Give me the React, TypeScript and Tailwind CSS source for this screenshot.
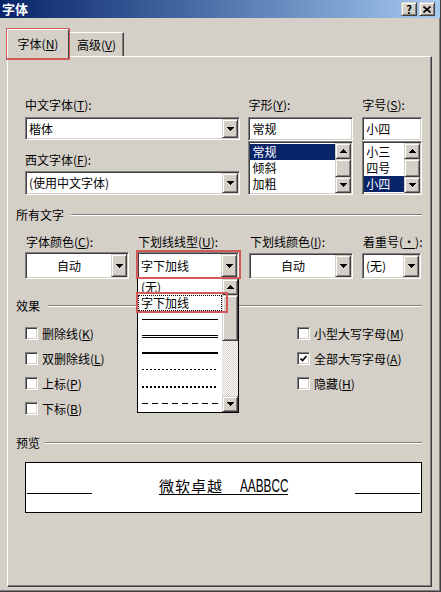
import React from "react";

// classic 3D edges
const sunken =
  "border border-t-[#808080] border-l-[#808080] border-r-white border-b-white shadow-[inset_1px_1px_0_#404040,inset_-1px_-1px_0_#d4d0c8]";
const raised =
  "border border-t-[#d4d0c8] border-l-[#d4d0c8] border-r-[#404040] border-b-[#404040] shadow-[inset_1px_1px_0_#fff,inset_-1px_-1px_0_#808080] bg-[#d4d0c8]";
const etched = "h-0 border-t border-t-[#808080] border-b border-b-white";

function ArrowDown() {
  return (
    <svg width="7" height="4" viewBox="0 0 7 4" shapeRendering="crispEdges">
      <path d="M0 0h7v1h-1v1h-1v1h-1v1h-1v-1h-1v-1h-1v-1h-1z" fill="#000" />
    </svg>
  );
}

function ArrowUp() {
  return (
    <svg width="7" height="4" viewBox="0 0 7 4" shapeRendering="crispEdges">
      <path d="M3 0h1v1h1v1h1v1h1v1h-7v-1h1v-1h1v-1h1z" fill="#000" />
    </svg>
  );
}

function Acc({ t, k, colon = true }: { t: string; k: string; colon?: boolean }) {
  return (
    <span className="whitespace-nowrap">
      {t}(<span className="underline underline-offset-[1px]">{k}</span>){colon ? ":" : ""}
    </span>
  );
}

function DropBtn() {
  return (
    <div className={`${raised} w-[16px] h-full flex items-center justify-center shrink-0`}>
      <ArrowDown />
    </div>
  );
}

function Combo({ text, center, className }: { text: string; center?: boolean; className: string }) {
  return (
    <div className={`${sunken} ${className} bg-white p-[1px] flex`}>
      <div className={`flex-1 flex items-center ${center ? "justify-center" : "pl-[2px]"}`}>{text}</div>
      <DropBtn />
    </div>
  );
}

function PickList({ items, selected }: { items: string[]; selected: number }) {
  return (
    <div className={`${sunken} h-[54px] bg-white p-[1px] flex`}>
      <div className="flex-1 flex flex-col pt-[1px]">
        {items.map((it, i) => (
          <div
            key={it}
            className={`h-[16px] leading-[16px] pl-[2px] ${i === selected ? "bg-[#0a246a] text-white" : ""}`}
          >
            {it}
          </div>
        ))}
      </div>
      <div className="w-[16px] flex flex-col">
        <div className={`${raised} h-[16px] flex items-center justify-center`}>
          <ArrowUp />
        </div>
        <div className={`${raised} h-[18px]`} />
        <div className={`${raised} h-[16px] flex items-center justify-center`}>
          <ArrowDown />
        </div>
      </div>
    </div>
  );
}

function Check({ label, k, on }: { label: string; k: string; on?: boolean }) {
  return (
    <div className="h-[25px] flex items-center">
      <div className={`${sunken} w-[13px] h-[13px] bg-white flex items-center justify-center`}>
        {on && (
          <svg width="7" height="7" viewBox="0 0 7 7">
            <path d="M0.5 3.5 L2.5 5.5 L6.5 1" stroke="#000" strokeWidth="1.6" fill="none" />
          </svg>
        )}
      </div>
      <span className="ml-[4px]">
        <Acc t={label} k={k} colon={false} />
      </span>
    </div>
  );
}

function Section({ title, gap }: { title: string; gap: string }) {
  return (
    <div className="h-[14px] flex items-center">
      <span>{title}</span>
      <div className={`flex-1 ${gap} ${etched}`} />
    </div>
  );
}

export default function App() {
  return (
    <div className="relative w-[441px] h-[592px] overflow-hidden bg-[#d4d0c8] border-r border-b border-[#404040] shadow-[inset_-1px_-1px_0_#808080] font-['Noto_Sans_CJK_SC','Liberation_Sans',sans-serif] text-[12px] leading-[14px] text-black">
      {/* title bar */}
      <div className="h-[18px] flex items-center bg-linear-to-r from-[#0a246a] to-[#a6caf0]">
        <span className="pl-[2px] text-white font-bold text-[13px] leading-[18px]">字体</span>
        <div className="ml-auto mr-[5px] flex gap-[2px]">
          <div className={`${raised} w-[16px] h-[14px] flex items-center justify-center text-[11px] font-bold leading-none`}>?</div>
          <div className={`${raised} w-[16px] h-[14px] flex items-center justify-center`}>
            <svg width="8" height="7" viewBox="0 0 8 7">
              <path d="M0.5 0.5 L7.5 6.5 M7.5 0.5 L0.5 6.5" stroke="#000" strokeWidth="1.6" />
            </svg>
          </div>
        </div>
      </div>

      <div className="pl-[7px] pt-[11px]">
        {/* tabs */}
        <div className="flex items-end h-[27px]">
          <div className="relative z-10 -mb-[2px] w-[62px] h-[29px] bg-[#d4d0c8] border-t border-l border-white border-r border-r-[#404040] flex items-center justify-center">
            <Acc t="字体" k="N" colon={false} />
          </div>
          <div className="w-[55px] h-[24px] border-t border-l border-white border-r border-r-[#404040] shadow-[inset_-1px_0_0_#808080] flex items-center justify-center">
            <Acc t="高级" k="V" colon={false} />
          </div>
        </div>

        {/* tab page */}
        <div className="w-[425px] h-[531px] border border-t-white border-l-white border-r-[#404040] border-b-[#404040] shadow-[inset_-1px_-1px_0_#808080] pl-[8px] pr-[9px]">
          <div className="ml-[9px] mt-[41px] flex">
            <div className="w-[216px]">
              <div className="h-[14px]"><Acc t="中文字体" k="T" /></div>
              <Combo text="楷体" className="mt-[5px] h-[23px]" />
              <div className="h-[14px] mt-[13px]"><Acc t="西文字体" k="F" /></div>
              <Combo text="(使用中文字体)" className="mt-[4px] h-[24px]" />
            </div>
            <div className="w-[105px] ml-[8px]">
              <div className="h-[14px]"><Acc t="字形" k="Y" /></div>
              <div className={`${sunken} mt-[5px] h-[24px] bg-white flex items-center pl-[3px]`}>常规</div>
              <PickList items={["常规", "倾斜", "加粗"]} selected={0} />
            </div>
            <div className="w-[60px] ml-[9px]">
              <div className="h-[14px]"><Acc t="字号" k="S" /></div>
              <div className={`${sunken} mt-[5px] h-[24px] bg-white flex items-center pl-[3px]`}>小四</div>
              <PickList items={["小三", "四号", "小四"]} selected={2} />
            </div>
          </div>

          <div className="mt-[13px]">
            <Section title="所有文字" gap="ml-[7px]" />
          </div>

          <div className="ml-[9px] mt-[13px] flex">
            <div className="w-[104px]">
              <div className="h-[14px] pl-[1px]"><Acc t="字体颜色" k="C" /></div>
              <Combo text="自动" center className="mt-[3px] h-[27px]" />
            </div>
            <div className="w-[102px] ml-[8px]">
              <div className="h-[14px] pl-[1px]"><Acc t="下划线线型" k="U" /></div>
              <Combo text="字下加线" className="mt-[3px] h-[27px]" />
            </div>
            <div className="w-[104px] ml-[10px]">
              <div className="h-[14px] pl-[1px]"><Acc t="下划线颜色" k="I" /></div>
              <Combo text="自动" center className="mt-[4px] h-[26px]" />
            </div>
            <div className="w-[59px] ml-[9px]">
              <div className="h-[14px] pl-[1px]"><Acc t="着重号" k="·" /></div>
              <Combo text="(无)" className="mt-[4px] h-[26px]" />
            </div>
          </div>

          <div className="mt-[20px]">
            <Section title="效果" gap="ml-[8px]" />
          </div>

          <div className="ml-[9px] mt-[8px] flex">
            <div className="w-[272px] flex flex-col">
              <Check label="删除线" k="K" />
              <Check label="双删除线" k="L" />
              <Check label="上标" k="P" />
              <Check label="下标" k="B" />
            </div>
            <div className="flex flex-col">
              <Check label="小型大写字母" k="M" />
              <Check label="全部大写字母" k="A" on />
              <Check label="隐藏" k="H" />
            </div>
          </div>

          <div className="mt-[15px]">
            <Section title="预览" gap="ml-[5px]" />
          </div>

          {/* preview */}
          <div className="ml-[9px] mt-[12px] w-[397px] h-[51px] bg-white border border-black flex items-start px-[1px]">
            <div className="mt-[30px] w-[65px] h-px bg-black" />
            <div className="flex-1 flex justify-center mt-[15px]">
              <div className="flex items-end h-[17px] border-b border-black">
                <span className="text-[15px] leading-[17px] tracking-[1px]">微软卓越</span>
                <span className="w-[17px]" />
                <span className="w-[48px] h-[17px] overflow-visible">
                  <span className="inline-block origin-left scale-x-[0.62] font-['Liberation_Sans',sans-serif] text-[19px] leading-[17px]">
                    AABBCC
                  </span>
                </span>
              </div>
            </div>
            <div className="mt-[30px] w-[65px] h-px bg-black" />
          </div>
        </div>
      </div>

      {/* open underline style list */}
      <div className="absolute left-[137px] top-[278px] w-[102px] h-[135px] bg-white border border-black flex">
        <div className="flex-1 flex flex-col">
          <div className="h-[16px] leading-[16px] pl-[3px]">(无)</div>
          <div className="h-[16px] leading-[14px] pl-[2px] border border-dotted border-black">字下加线</div>
          <div className="h-[17px] flex items-center px-[4px]"><div className="w-full h-px bg-black" /></div>
          <div className="h-[17px] flex items-center px-[4px]">
            <div className="w-full h-[3px] border-t border-b border-black" />
          </div>
          <div className="h-[17px] flex items-center px-[4px]"><div className="w-full h-[2px] bg-black" /></div>
          <div className="h-[17px] flex items-center px-[4px]">
            <div className="w-full h-px bg-[repeating-linear-gradient(90deg,#000_0_2px,transparent_2px_4px)]" />
          </div>
          <div className="h-[17px] flex items-center px-[4px]">
            <div className="w-full h-[2px] bg-[repeating-linear-gradient(90deg,#000_0_2px,transparent_2px_4px)]" />
          </div>
          <div className="h-[17px] flex items-center px-[4px]">
            <div className="w-full h-px bg-[repeating-linear-gradient(90deg,#000_0_6px,transparent_6px_10px)]" />
          </div>
        </div>
        <div className="w-[16px] flex flex-col">
          <div className={`${raised} h-[16px] flex items-center justify-center`}>
            <ArrowUp />
          </div>
          <div className={`${raised} h-[46px]`} />
          <div className="flex-1 bg-[repeating-conic-gradient(#d4d0c8_0_25%,#fff_0_50%)] bg-size-[2px_2px]" />
          <div className={`${raised} h-[16px] flex items-center justify-center`}>
            <ArrowDown />
          </div>
        </div>
      </div>

      {/* red highlight frames */}
      <div className="absolute left-[6px] top-[28px] w-[64px] h-[32px] border-2 border-[#d05a5a]" />
      <div className="absolute left-[136px] top-[250px] w-[105px] h-[29px] border-2 border-[#d05a5a]" />
      <div className="absolute left-[136px] top-[292px] w-[92px] h-[21px] border-2 border-[#d05a5a]" />
    </div>
  );
}
